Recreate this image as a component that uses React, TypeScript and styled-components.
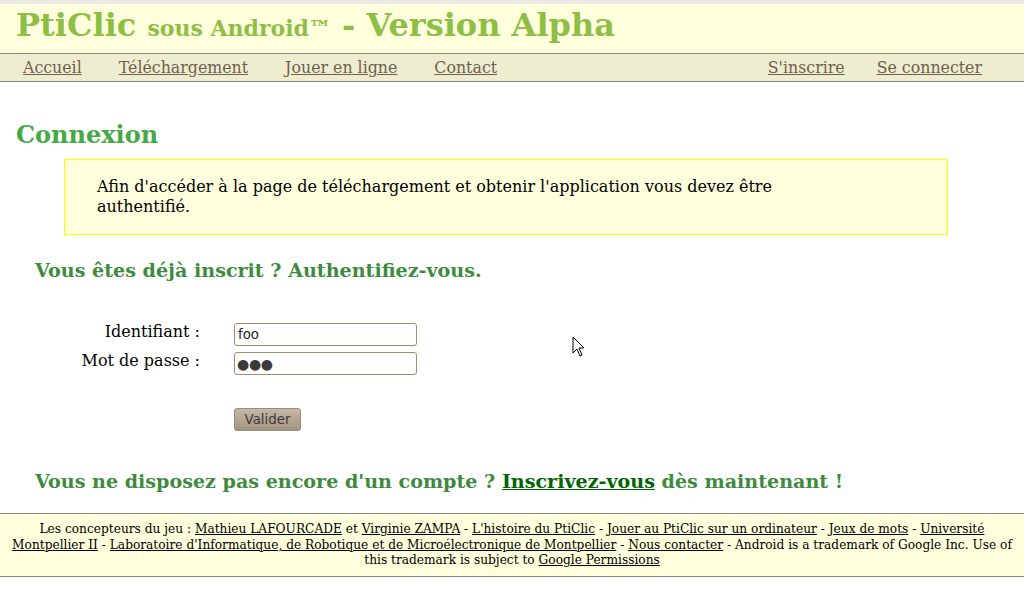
import React from 'react'
import styled, { createGlobalStyle } from 'styled-components'

const Global = createGlobalStyle`
    html, body {
        margin: 0;
        padding: 0;
        background: #ffffff;
    }
    body {
        font-family: "DejaVu Serif", "Liberation Serif", serif;
        font-size: 16px;
        color: #000;
    }
`;

const Page = styled.div`
    position: relative;
    width: 1024px;
    min-height: 600px;
`;

const Header = styled.header`
    height: 53px;
    box-sizing: border-box;
    border-top: 4px solid #ece9e4;
    background: #ffffdd;
    display: flex;
    align-items: center;
    padding: 0 0 8px 16px;
`;

const Title = styled.h1`
    margin: 0;
    font-size: 32px;
    line-height: 1;
    font-weight: bold;
    color: #8cbf44;
    white-space: nowrap;
`;

const Small = styled.span`
    font-size: 22px;
`;

const Nav = styled.nav`
    height: 27px;
    border-top: 1px solid #8a8a80;
    border-bottom: 1px solid #8a8a80;
    background: #efedd0;
    display: flex;
    align-items: center;
    padding: 0 42px 0 23px;
`;

const NavGroup = styled.div<{ gap: number }>`
    display: flex;
    gap: ${p => p.gap}px;
`;

const Spacer = styled.div`
    flex: 1;
`;

const NavLink = styled.a`
    color: #6f604f;
    text-decoration: underline;
    font-size: 15.8px;
    line-height: 20px;
    cursor: pointer;
`;

const Main = styled.main`
    padding: 0 16px;
`;

const PageTitle = styled.h2`
    margin: 39px 0 0 0;
    font-size: 24px;
    line-height: 28px;
    color: #45a945;
`;

const Notice = styled.div`
    margin: 10px 60px 0 48px;
    height: 74px;
    box-sizing: content-box;
    border: 1px solid #ffff00;
    background: #ffffdd;
    padding: 0 150px 0 32px;
    display: flex;
    align-items: center;
`;

const NoticeText = styled.p`
    margin: 0;
    line-height: 20px;
`;

const Subtitle = styled.h3<{ top: number }>`
    margin: ${p => p.top}px 0 0 19px;
    font-size: 19.1px;
    line-height: 22px;
    color: #3d8b3d;
`;

const SignupLink = styled.a`
    color: #006400;
    text-decoration: underline;
`;

const Form = styled.form`
    margin-top: 41px;
    display: grid;
    grid-template-columns: 184px 183px;
    column-gap: 34px;
    row-gap: 6px;
    align-items: start;
`;

const Label = styled.label`
    text-align: right;
    line-height: 18px;
`;

const Field = styled.input`
    box-sizing: border-box;
    width: 183px;
    height: 23px;
    margin: 0;
    padding: 0 3px;
    border: 1px solid #a08c6c;
    border-radius: 3px;
    background: #fff;
    font-family: "DejaVu Sans", "Liberation Sans", sans-serif;
    font-size: 13.33px;
    color: #222;
    outline: none;
`;

const Dots = styled(Field)`
    color: #3a3a3a;
    font-size: 14px;
    letter-spacing: -0.3px;
    padding-left: 2px;
`;

const ButtonCell = styled.div`
    grid-column: 2;
    margin-top: 27px;
`;

const Button = styled.button`
    box-sizing: border-box;
    width: 67px;
    height: 23px;
    padding: 0;
    border: 1px solid #9a8a76;
    border-radius: 3px;
    background: linear-gradient(#c6b8a6, #a29380);
    font-family: "DejaVu Sans", "Liberation Sans", sans-serif;
    font-size: 13.33px;
    color: #3a3a3a;
`;

const Footer = styled.footer`
    margin-top: 20px;
    border-top: 1px solid #8a8a80;
    border-bottom: 1px solid #8a8a80;
    background: #ffffdd;
    padding: 8px 10px 7px;
    text-align: center;
    font-size: 12.2px;
    line-height: 15.5px;
`;

const FootLink = styled.a`
    color: #000;
    text-decoration: underline;
`;

const Cursor = styled.svg`
    position: absolute;
    left: 572px;
    top: 336px;
`;

export default function App() {
    return (
        <Page>
            <Global />
            <Header>
                <Title>
                    PtiClic <Small>sous Android™</Small> - Version Alpha
                </Title>
            </Header>
            <Nav>
                <NavGroup gap={37}>
                    <NavLink>Accueil</NavLink>
                    <NavLink>Téléchargement</NavLink>
                    <NavLink>Jouer en ligne</NavLink>
                    <NavLink>Contact</NavLink>
                </NavGroup>
                <Spacer />
                <NavGroup gap={32}>
                    <NavLink>S'inscrire</NavLink>
                    <NavLink>Se connecter</NavLink>
                </NavGroup>
            </Nav>
            <Main>
                <PageTitle>Connexion</PageTitle>
                <Notice>
                    <NoticeText>
                        Afin d'accéder à la page de téléchargement et obtenir l'application vous devez être authentifié.
                    </NoticeText>
                </Notice>
                <Subtitle top={25}>Vous êtes déjà inscrit ? Authentifiez-vous.</Subtitle>
                <Form onSubmit={e => e.preventDefault()}>
                    <Label>Identifiant :</Label>
                    <Field value="foo" readOnly />
                    <Label>Mot de passe :</Label>
                    <Dots value="●●●" readOnly />
                    <ButtonCell>
                        <Button type="submit">Valider</Button>
                    </ButtonCell>
                </Form>
                <Subtitle top={40}>
                    Vous ne disposez pas encore d'un compte ? <SignupLink>Inscrivez-vous</SignupLink> dès maintenant !
                </Subtitle>
            </Main>
            <Footer>
                Les concepteurs du jeu : <FootLink>Mathieu LAFOURCADE</FootLink> et <FootLink>Virginie ZAMPA</FootLink> - <FootLink>L'histoire du PtiClic</FootLink> - <FootLink>Jouer au PtiClic sur un ordinateur</FootLink> - <FootLink>Jeux de mots</FootLink> - <FootLink>Université Montpellier II</FootLink> - <FootLink>Laboratoire d'Informatique, de Robotique et de Microélectronique de Montpellier</FootLink> - <FootLink>Nous contacter</FootLink> - Android is a trademark of Google Inc. Use of this trademark is subject to <FootLink>Google Permissions</FootLink>
            </Footer>
            <Cursor width="14" height="22" viewBox="0 0 14 22">
                <path d="M1 1 L1 17 L5 13 L8 20 L10 19 L7 12 L12 12 Z" fill="#fff" stroke="#000" strokeWidth="1" strokeLinejoin="round" />
            </Cursor>
        </Page>
    )
}
